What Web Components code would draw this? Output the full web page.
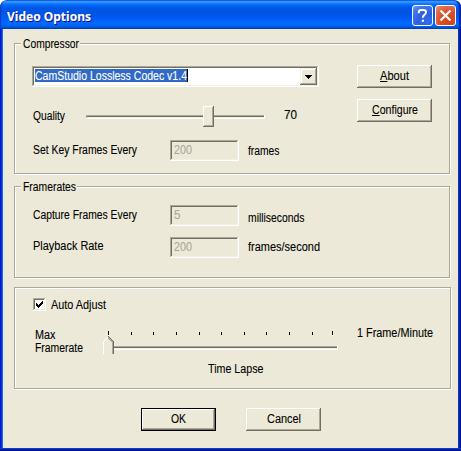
<!DOCTYPE html>
<html lang="en"><head><meta charset="utf-8"><title>Video Options</title>
<style>
body{margin:0;background:#fff;overflow:hidden;font:12.5px/14px "Liberation Sans",sans-serif;color:#000}
</style></head><body>
<video-options></video-options>
<script>
const define=(name,html,init)=>customElements.define(name,class extends HTMLElement{
  connectedCallback(){
    if(this.shadowRoot)return;
    this.attachShadow({mode:'open'}).innerHTML=html;
    if(init)init(this,this.shadowRoot);
  }
});

/* Label squeezed or stretched to a set advance width */
define('fit-text',`<style>
:host{display:block;height:14px;white-space:nowrap;flex:none}
span{display:inline-block;transform-origin:0 0;-webkit-text-stroke:.1px currentColor}
::slotted(u){text-underline-offset:1px;text-decoration-thickness:1px}
</style><span><slot></slot></span>`,(el,root)=>{
  const w=+el.getAttribute('w'),s=root.querySelector('span');
  el.style.width=w+'px';
  s.style.transform=`scaleX(${w/s.getBoundingClientRect().width})`;
});

define('push-button',`<style>
:host{display:flex;box-sizing:border-box;width:75px;height:23px;justify-content:center;padding-top:4px;background:#ece9d8;
box-shadow:inset -1px -1px #716f64,inset 1px 1px #fff,inset -2px -2px #aca899}
:host([default]){border:1px solid #000;padding-top:3px}
</style><slot></slot>`);

define('edit-box',`<style>
:host{display:block;box-sizing:border-box;flex:none;width:69px;height:21px;padding:3px 0 0 3.5px;color:#aca899;
box-shadow:inset -1px -1px #fff,inset 1px 1px #aca899,inset -2px -2px #f1efe2,inset 2px 2px #716f64}
</style><slot></slot>`);

define('combo-box',`<style>
:host{display:flex;box-sizing:border-box;width:287px;height:21px;padding:2px;background:#fff;justify-content:space-between;
box-shadow:inset -1px -1px #fff,inset 1px 1px #aca899,inset -2px -2px #f1efe2,inset 2px 2px #716f64}
.sel{box-sizing:border-box;margin:1px 0 0 1px;height:13px;width:153px;background:#316ac5;color:#fff;border-right:1px solid #000}
.drop{width:17px;height:17px;background:#ece9d8;box-shadow:inset -1px -1px #716f64,inset 1px 1px #f1efe2,inset -2px -2px #aca899,inset 2px 2px #fff}
svg{display:block}
</style><div class="sel"><slot></slot></div><div class="drop"><svg width="17" height="17" shape-rendering="crispEdges"><path d="M5 7h7v1h-1v1h-1v1h-1v1h-1v-1h-1v-1h-1v-1h-1z"/></svg></div>`);

define('check-box',`<style>
:host{display:block;width:13px;height:13px;background:#fff;box-shadow:inset -1px -1px #fff,inset 1px 1px #aca899,inset -2px -2px #f1efe2,inset 2px 2px #716f64}
svg{display:block}
</style><svg width="13" height="13" shape-rendering="crispEdges"><path d="M3 5h1v1h1v1h1v-1h1v-1h1v-1h1v-1h1v3h-1v1h-1v1h-1v1h-1v1h-1v-1h-1v-1h-1z"/></svg>`);

define('group-box',`<style>
:host{display:block;box-sizing:border-box;border:1px solid #aca899;box-shadow:1px 1px #fff,inset 1px 1px #fff}
.legend{display:flex;height:14px;margin-top:-7px}
.legend ::slotted(*){background:#ece9d8;margin-left:6px;padding:0 1px 0 2px}
</style><div class="legend"><slot name="legend"></slot></div><slot></slot>`);

define('quality-slider',`<style>:host{display:block;height:21px}svg{display:block}</style>
<svg width="179" height="21" shape-rendering="crispEdges">
<path fill="#fff" d="M0 9h179v4H0z"/><path fill="#aca899" d="M0 9h178v1H0zM0 9h1v3H0z"/><path fill="#716f64" d="M1 10h177v1H1z"/><path fill="#f1efe2" d="M1 11h177v1H1z"/>
<path fill="#ece9d8" d="M117 0h11v21h-11z"/><path fill="#fff" d="M117 0h10v1h-9v19h-1z"/><path fill="#716f64" d="M127 0h1v21h-11v-1h10z"/><path fill="#aca899" d="M126 1h1v19h-9v-1h8z"/></svg>`);

define('lapse-slider',`<style>:host{display:block;height:24px}svg{display:block}</style>
<svg width="235" height="24" shape-rendering="crispEdges">
<path d="M5 0h1v4h-1zM28 1h1v3h-1zM50 1h1v3h-1zM73 1h1v3h-1zM96 1h1v3h-1zM118 1h1v3h-1zM141 1h1v3h-1zM163 1h1v3h-1zM186 1h1v3h-1zM209 1h1v3h-1zM229 0h1v4h-1z"/>
<path fill="#fff" d="M9 15h226v4H9z"/><path fill="#aca899" d="M9 15h225v1H9z"/><path fill="#716f64" d="M9 16h225v1H9z"/><path fill="#f1efe2" d="M9 17h225v1H9z"/>
<path fill="#ece9d8" d="M5 5h1l5 5v13H0V10z"/>
<path fill="#fff" d="M5 5h1v1h-1v1h-1v1h-1v1h-1v1h-1v13h-1v-13h1v-1h1v-1h1v-1h1v-1h1z"/>
<path fill="#aca899" d="M5 6h1v1h1v1h1v1h1v1h1v13h-1v-12h-1v-1h-1v-1h-1v-1h-1z"/>
<path fill="#716f64" d="M5 5h1v1h1v1h1v1h1v1h1v1h1v13h-1v-13h-1v-1h-1v-1h-1v-1h-1v-1h-1z"/></svg>`);

define('title-button',`<style>
:host{display:block;box-sizing:border-box;width:21px;height:21px;border:1px solid #fff;border-radius:3px;
background:radial-gradient(circle at 75% 85%,#2d6cf4,#2c5fe0 45%,#4a7cec 80%,#7fa3f3)}
:host([kind=close]){background:radial-gradient(circle at 70% 80%,#d6421a,#db4d2a 45%,#e4704f 80%,#f0a088)}
svg{display:block}.q,.x{display:none}:host([kind=help]) .q,:host([kind=close]) .x{display:inline}
</style><svg width="19" height="19" fill="none" stroke="#fff">
<g class="q" stroke-width="2"><path d="M5.8 7.2V6Q5.8 4 8 4h2.5Q13 4 13 6.2 13 7.7 11.4 8.8 9.8 9.8 9.8 11.8"/><path d="M8.8 14.8h2.2"/></g>
<path class="x" stroke-width="2.2" d="M4.5 4.5l10 10M14.5 4.5l-10 10"/></svg>`);

define('title-bar',`<style>
:host{display:flex;box-sizing:border-box;height:29px;padding:5px 5px 0 7px;gap:2px;color:#fff;font:bold 13px/18px "Noto Sans","Open Sans",sans-serif;text-shadow:1px 1px #0f1089;border-radius:7px 7px 0 0;
box-shadow:inset -2px 0 1px #0026a8,inset 1px 0 1px #0a3cc8;
background:linear-gradient(#0058e6 0,#3a93ff 1.5px,#288eff 2.5px,#127dff 3.5px,#036ffc 4.5px,#0262ee 6px,#0057e5 8px,#0054e3 12px,#0055eb 15px,#005bf5 19px,#026afe 23px,#0062ef 26px,#0052d6 27.5px,#0040ab 29px)}
::slotted(fit-text){margin:2px auto 0 0}
</style><slot></slot>`);

define('video-options',`<style>
:host{display:block;box-sizing:border-box;width:461px;height:451px;overflow:hidden;border-radius:7px 7px 0 0;
background:linear-gradient(90deg,#0019cf 1px,#0831d9 1px 2px,#166aee 2px 3px,#ece9d8 3px 458px,#003dd7 458px 459px,#001ea0 459px 460px,#00138c 460px)}
.client{box-sizing:border-box;height:419px;margin:0 3px;padding:14px 7px 0 11px;background:#ece9d8}
.foot{height:3px;background:linear-gradient(#0441d8 1px,#001ea0 1px 2px,#00138c 2px)}
.row{display:flex;align-items:flex-start}
.g1{width:436px;height:131px}.g2{width:436px;height:92px;margin-top:12px}.g3{width:437px;height:102px;margin-top:9px}
.cols{display:grid;grid-template-columns:325px 75px;padding:14px 0 0 17px}
.stack{display:flex;flex-direction:column;gap:11px}
.form{display:grid;grid-template-columns:137.5px 69px auto;column-gap:0;padding-left:17.5px}
</style>
<title-bar><fit-text w="84">Video Options</fit-text><title-button kind="help"></title-button><title-button kind="close"></title-button></title-bar>
<div class="client">
<group-box class="g1"><fit-text slot="legend" w="56">Compressor</fit-text>
 <div class="cols"><div>
  <combo-box style="margin-top:1px"><fit-text w="152">CamStudio Lossless Codec v1.4</fit-text></combo-box>
  <div class="row" style="margin-top:19px"><fit-text w="32" style="margin:3px 21.5px 0 .5px">Quality</fit-text><quality-slider></quality-slider><fit-text w="13" style="margin:2px 0 0 19px">70</fit-text></div>
  <div class="row" style="margin-top:13px"><fit-text w="104" style="margin:3px 33.5px 0 .5px">Set Key Frames Every</fit-text><edit-box><fit-text w="18">200</fit-text></edit-box><fit-text w="31.5" style="margin:4px 0 0 9px">frames</fit-text></div>
 </div><div class="stack"><push-button><fit-text w="29"><u>A</u>bout</fit-text></push-button><push-button><fit-text w="46"><u>C</u>onfigure</fit-text></push-button></div></div>
</group-box>
<group-box class="g2"><fit-text slot="legend" w="53">Framerates</fit-text>
 <div class="form" style="margin-top:11px"><fit-text w="104" style="margin-top:3px">Capture Frames Every</fit-text><edit-box><fit-text w="6.5">5</fit-text></edit-box><fit-text w="56.5" style="margin:6px 0 0 9px">milliseconds</fit-text></div>
 <div class="form" style="margin-top:11px"><fit-text w="70.5" style="margin-top:2px">Playback Rate</fit-text><edit-box><fit-text w="18">200</fit-text></edit-box><fit-text w="72" style="margin:3px 0 0 9px">frames/second</fit-text></div>
</group-box>
<group-box class="g3">
 <div class="row" style="margin:3px 0 0 18px"><check-box></check-box><fit-text w="55" style="margin-left:4.5px">Auto Adjust</fit-text></div>
 <div class="row" style="margin:16px 0 0 20px"><div><fit-text w="20.5" style="height:13px">Max</fit-text><fit-text w="48">Framerate</fit-text></div><lapse-slider style="margin:3px 0 0 20px"></lapse-slider><fit-text w="76" style="margin:-2px 0 0 19px">1 Frame/Minute</fit-text></div>
 <fit-text w="55.5" style="margin:7px 0 0 192.5px">Time Lapse</fit-text>
</group-box>
<div class="row" style="margin:19px 0 0 127px;gap:30px"><push-button default><fit-text w="15">OK</fit-text></push-button><push-button><fit-text w="34">Cancel</fit-text></push-button></div>
</div>
<div class="foot"></div>`);
</script></body></html>
